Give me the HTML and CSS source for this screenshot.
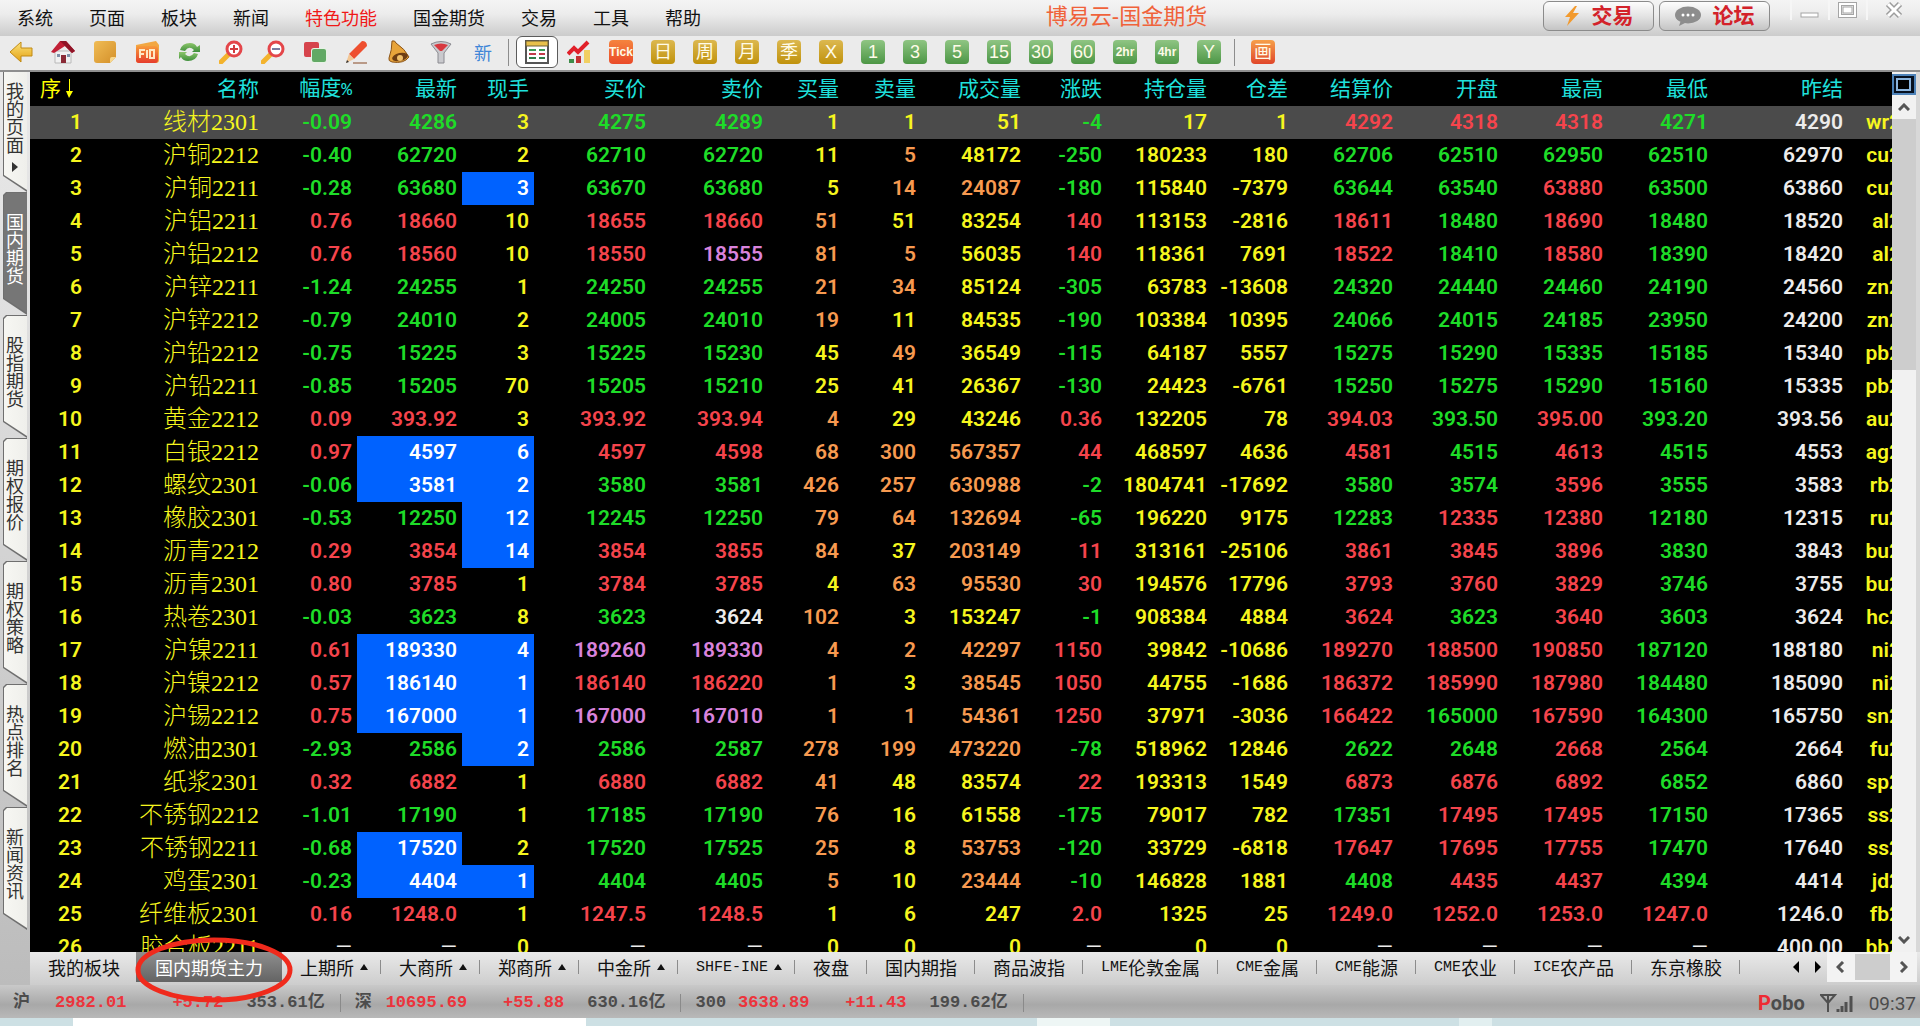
FILE: index.html
```html
<!DOCTYPE html>
<html lang="zh-CN">
<head>
<meta charset="utf-8">
<title>博易云-国金期货</title>
<link rel="stylesheet" href="styles.css">
</head>
<body>
<svg class="defs" aria-hidden="true">
  <defs>
    <linearGradient id="gold" x1="0" y1="0" x2="0" y2="1"><stop offset="0" stop-color="#fbe27a"/><stop offset="1" stop-color="#e3a012"/></linearGradient>
    <linearGradient id="note" x1="0" y1="0" x2="1" y2="1"><stop offset="0" stop-color="#f0bc55"/><stop offset="1" stop-color="#d4902a"/></linearGradient>
    <linearGradient id="hot" x1="0" y1="0" x2="0" y2="1"><stop offset="0" stop-color="#f79a3a"/><stop offset="1" stop-color="#e63c2c"/></linearGradient>
    <linearGradient id="leaf" x1="0" y1="0" x2="0" y2="1"><stop offset="0" stop-color="#8cc56a"/><stop offset="1" stop-color="#3f8f3c"/></linearGradient>
  </defs>
</svg>

<header class="menubar">
  <nav class="menu">
    <button>系统</button><button>页面</button><button>板块</button><button>新闻</button><button class="hot">特色功能</button><button>国金期货</button><button>交易</button><button>工具</button><button>帮助</button>
  </nav>
  <h1 class="title">博易云-国金期货</h1>
  <div class="quick">
    <button class="pill"><svg width="16" height="22" viewBox="0 0 16 22"><path d="M11 1 1 12h5l-3 9L15 8H9l4-7z" fill="#f29a2e"/></svg>交易</button>
    <button class="pill"><svg width="26" height="20" viewBox="0 0 26 20"><ellipse cx="13" cy="9" rx="13" ry="8.500" fill="#8d8d8d"/><path d="M6 14 4 20l8-4z" fill="#8d8d8d"/><g fill="#fff"><circle cx="8" cy="9" r="1.500"/><circle cx="13" cy="9" r="1.500"/><circle cx="18" cy="9" r="1.500"/></g></svg>论坛</button>
  </div>
  <div class="winctl">
    <button aria-label="最小化"><svg width="20" height="18" viewBox="0 0 20 18"><rect x="1" y="12" width="17" height="4" fill="#fff" stroke="#a5a5a5"/></svg></button>
    <button aria-label="最大化"><svg width="20" height="18" viewBox="0 0 20 18"><rect x="2" y="3" width="15" height="12" fill="none" stroke="#a5a5a5" stroke-width="4"/><rect x="2" y="3" width="15" height="12" fill="none" stroke="#fff" stroke-width="2"/><rect x="5" y="6" width="9" height="6" fill="#fff" stroke="#a5a5a5"/></svg></button>
    <button aria-label="关闭"><svg width="20" height="18" viewBox="0 0 20 18"><path d="m4 3 12 12M16 3 4 15" stroke="#9d9d9d" stroke-width="6"/><path d="m4 3 12 12M16 3 4 15" stroke="#fff" stroke-width="3"/></svg></button>
  </div>
</header>

<div class="toolbar" role="toolbar">
  <button aria-label="后退"><svg viewBox="0 0 24 24"><path d="M1 12 12 2v6h11v8H12v6z" fill="url(#gold)" stroke="#c18a14"/></svg></button>
  <button aria-label="首页"><svg viewBox="0 0 24 24"><path d="M4 11h16v12H4z" fill="#f1f1f1" stroke="#b9b9b9"/><path d="M0 12 9 1h6l9 10-3 2-7-7-11 7z" fill="#c22036"/><path d="M9 1h6l9 10-3 2z" fill="#8f1527"/><path d="M10 15h5v8h-5z" fill="#8a2a36"/><path d="M6 14h3v3H6zM16 14h3v3h-3z" fill="#7d8fa8"/></svg></button>
  <button aria-label="便笺"><svg viewBox="0 0 24 24"><path d="M1 4q0-3 3-3h16q3 0 3 3v13l-6 6H4q-3 0-3-3z" fill="url(#note)"/><path d="m17 23 6-6h-4q-2 0-2 2z" fill="#f8d88e"/></svg></button>
  <button aria-label="F10 资料"><svg viewBox="0 0 24 24"><path d="m1 5 20-4 3 4v15q0 3-3 3H4q-3 0-3-3z" fill="#f2a742"/><rect x="1" y="6" width="22" height="17" rx="3" fill="url(#hot)"/><path d="M5 18v-8h5M5 14h4M12 10v8M15 10h4v8h-4z" fill="none" stroke="#ffe8c4" stroke-width="2"/></svg></button>
  <button aria-label="刷新"><svg viewBox="0 0 24 24"><path d="M3 10q2-7 10-7 5 0 7 4l3-2v7h-8l2-2q-5-5-9 1z" fill="url(#leaf)"/><path d="M21 14q-2 7-10 7-5 0-7-4l-2 2v-7h8l-2 2q5 5 9-1z" fill="url(#leaf)"/></svg></button>
  <button aria-label="放大"><svg viewBox="0 0 24 24"><path d="m2 22 8-8" stroke="#f3b32d" stroke-width="5" stroke-linecap="round"/><circle cx="15" cy="9" r="7" fill="#fff" stroke="#e4464a" stroke-width="3"/><path d="M11 9h8M15 5v8" stroke="#d33a3e" stroke-width="2"/></svg></button>
  <button aria-label="缩小"><svg viewBox="0 0 24 24"><path d="m2 22 8-8" stroke="#f3b32d" stroke-width="5" stroke-linecap="round"/><circle cx="15" cy="9" r="7" fill="#fff" stroke="#e4464a" stroke-width="3"/><path d="M11 9h8" stroke="#7b7ba0" stroke-width="2"/></svg></button>
  <button aria-label="叠加"><svg viewBox="0 0 24 24"><rect x="1" y="2" width="15" height="15" rx="2" fill="#d6444c"/><rect x="8" y="8" width="16" height="15" rx="3" fill="#e6f3e4"/><rect x="9" y="9" width="14" height="13" rx="2" fill="#62a965"/></svg></button>
  <button aria-label="画笔"><svg viewBox="0 0 24 24"><path d="M17 1q5 0 5 5L9 19l-5-5z" fill="#ee4f2f"/><path d="m4 14 5 5-8 4z" fill="#f3c693"/><path d="m1 23 3-1-2-2z" fill="#333"/><path d="M8 23h14" stroke="#b99a88" stroke-width="2"/></svg></button>
  <button aria-label="预警"><svg viewBox="0 0 24 24"><path d="M5 1q3-1 4 2 9 6 13 14-5 7-17 5-4-1-3-4 3-8 3-17z" fill="#e8a43a" stroke="#8a5317"/><ellipse cx="13" cy="17" rx="8" ry="4" transform="rotate(-12 13 17)" fill="#6e3d12"/><circle cx="13" cy="18" r="3" fill="#f1c06a"/></svg></button>
  <button aria-label="筛选"><svg viewBox="0 0 24 24"><path d="M2 4q10-5 20 0l-7 9v10H9V13z" fill="#c9c9cd" stroke="#8a8a90"/><path d="M5 5q7-3 14 0l-6 6h-2z" fill="#d8383f"/></svg></button>
  <button class="new">新</button>
  <span class="rule"></span>
  <button class="active" aria-label="报价列表"><svg viewBox="0 0 24 24"><rect x="1" y="1" width="22" height="22" fill="#fff" stroke="#555" stroke-width="2"/><path d="M1 1h22v5H1z" fill="#e8c04a" stroke="#6f6136"/><g stroke-width="2"><path d="M4 10h7M14 10h6" stroke="#3b9c56"/><path d="M4 14h7M14 14h6" stroke="#c23c4a"/><path d="M4 18h7M14 18h6" stroke="#2f7d49"/></g></svg></button>
  <button aria-label="走势"><svg viewBox="0 0 24 24"><path d="m1 14 6-6 4 4L21 2" fill="none" stroke="#e1202a" stroke-width="4"/><path d="M2 19h5v4H2z" fill="#3e8c49"/><path d="M9 16h5v7H9z" fill="#c43232"/><path d="M17 10h6v13h-6z" fill="#f1cf62"/></svg></button>
  <button><span class="tile tick">Tick</span></button>
  <button><span class="tile gold">日</span></button>
  <button><span class="tile gold">周</span></button>
  <button><span class="tile gold">月</span></button>
  <button><span class="tile gold">季</span></button>
  <button><span class="tile gold">X</span></button>
  <button><span class="tile green">1</span></button>
  <button><span class="tile green">3</span></button>
  <button><span class="tile green">5</span></button>
  <button><span class="tile green">15</span></button>
  <button><span class="tile green">30</span></button>
  <button><span class="tile green">60</span></button>
  <button><span class="tile green small">2hr</span></button>
  <button><span class="tile green small">4hr</span></button>
  <button><span class="tile green">Y</span></button>
  <span class="rule"></span>
  <button><span class="tile orange">画</span></button>
</div>

<main class="work">
  <nav class="side">
    <button class="first"><span>我的页面</span><i class="more"></i></button>
    <button class="current"><span>国内期货</span></button>
    <button><span>股指期货</span></button>
    <button><span>期权报价</span></button>
    <button><span>期权策略</span></button>
    <button><span>热点排名</span></button>
    <button><span>新闻资讯</span></button>
  </nav>
  <div class="content">
    <div class="board">
      <div class="quotes">
        <table>
          <colgroup><col class="w57"><col class="w177"><col class="w93"><col class="w105"><col class="w72"><col class="w117"><col class="w117"><col class="w76"><col class="w77"><col class="w105"><col class="w81"><col class="w105"><col class="w81"><col class="w105"><col class="w105"><col class="w105"><col class="w105"><col class="w135"><col class="w94"></colgroup>
          <thead>
            <tr><th class="order">序<svg width="9" height="20" viewBox="0 0 9 20"><path d="M4 0v12h-3l3 7 4-7H5V0z" fill="#ff0"/></svg></th><th>名称</th><th>幅度<small>%</small></th><th>最新</th><th>现手</th><th>买价</th><th>卖价</th><th>买量</th><th>卖量</th><th>成交量</th><th>涨跌</th><th>持仓量</th><th>仓差</th><th>结算价</th><th>开盘</th><th>最高</th><th>最低</th><th>昨结</th><th></th></tr>
          </thead>
          <tbody id="rows"></tbody>
        </table>
      </div>
      <div class="vscroll">
        <button class="restore" aria-label="还原"><svg width="24" height="21" viewBox="0 0 24 21"><rect x="1" y="1" width="22" height="19" fill="#06101f" stroke="#4d82b8" stroke-width="2"/><rect x="5" y="5" width="13" height="11" fill="#000" stroke="#8ab4dd" stroke-width="2"/></svg></button>
        <button aria-label="上滚"><svg width="12" height="8" viewBox="0 0 12 8"><path d="m1 7 5-5 5 5" fill="none" stroke="#555" stroke-width="3"/></svg></button>
        <div class="track"><div class="thumb"></div></div>
        <button aria-label="下滚"><svg width="12" height="8" viewBox="0 0 12 8"><path d="m1 1 5 5 5-5" fill="none" stroke="#555" stroke-width="3"/></svg></button>
      </div>
    </div>
    <div class="sheets">
      <button>我的板块</button>
      <button class="current">国内期货主力<svg class="ring" width="160" height="68" viewBox="0 0 160 68" aria-hidden="true"><ellipse cx="80" cy="34" rx="76" ry="30" fill="none" stroke="#f02a1c" stroke-width="5"/></svg></button>
      <button class="sep">上期所<i class="up"></i></button>
      <button class="sep">大商所<i class="up"></i></button>
      <button class="sep">郑商所<i class="up"></i></button>
      <button class="sep">中金所<i class="up"></i></button>
      <button class="sep"><b>SHFE-INE</b><i class="up"></i></button>
      <button class="sep">夜盘</button>
      <button class="sep">国内期指</button>
      <button class="sep">商品波指</button>
      <button class="sep"><b>LME</b>伦敦金属</button>
      <button class="sep"><b>CME</b>金属</button>
      <button class="sep"><b>CME</b>能源</button>
      <button class="sep"><b>CME</b>农业</button>
      <button class="sep"><b>ICE</b>农产品</button>
      <button class="sep">东京橡胶</button>
      <div class="pager">
        <button aria-label="前一页"><svg width="6" height="12" viewBox="0 0 6 12"><path d="M6 0v12L0 6z"/></svg></button>
        <button aria-label="后一页"><svg width="6" height="12" viewBox="0 0 6 12"><path d="M0 0v12l6-6z"/></svg></button>
      </div>
      <div class="hscroll">
        <button aria-label="左滚"><svg width="9" height="12" viewBox="0 0 9 12"><path d="M7 1 2 6l5 5" fill="none" stroke="#555" stroke-width="3"/></svg></button>
        <div class="thumb"></div>
        <button aria-label="右滚"><svg width="9" height="12" viewBox="0 0 9 12"><path d="m2 1 5 5-5 5" fill="none" stroke="#555" stroke-width="3"/></svg></button>
      </div>
    </div>
  </div>
</main>

<footer class="status">
  <div class="index"><span class="tag">沪</span><span class="rise">2982.01</span><span class="rise diff">+5.72</span><span>353.61亿</span></div>
  <div class="index"><span>深</span><span class="rise">10695.69</span><span class="rise diff">+55.88</span><span>630.16亿</span></div>
  <div class="index"><span>300</span><span class="rise near">3638.89</span><span class="rise diff">+11.43</span><span>199.62亿</span></div>
  <div class="tray">
    <span class="brand"><em>P</em>obo</span>
    <svg width="34" height="20" viewBox="0 0 34 20" fill="none" stroke="#505050" stroke-width="2"><path d="M1 2h14L8 10zM8 3v16" /><path d="M18 16v3M22 13v6M26 9v10M31 3v16" stroke-width="3"/></svg>
    <time>09:37</time>
  </div>
</footer>
<div class="desktop"><span class="paper"></span><span class="card"></span><span class="chip"></span></div>
<script src="quotes.js"></script>
</body>
</html>
```

FILE: styles.css
```css
* { box-sizing: border-box; }

body {
  margin: 0;
  height: 100vh;
  display: flex;
  flex-direction: column;
  overflow: hidden;
  background: #c4c4c4;
  font: 18px "Liberation Sans", "Noto Sans CJK SC", sans-serif;
  color: #111;
}

button {
  margin: 0;
  padding: 0;
  border: 0;
  background: none;
  color: inherit;
  font: inherit;
  white-space: nowrap;
}

.defs { position: absolute; width: 0; height: 0; }

/* menu bar */
.menubar {
  flex: none;
  display: flex;
  height: 36px;
  background: linear-gradient(#f4f4f4, #ececec 40%, #cbcbcb);
}
.menu { display: flex; gap: 36px; padding: 0 0 2px 17px; }
.menu .hot { color: #f01818; }
.title {
  flex: 1;
  margin: 0;
  padding-left: 9px;
  text-align: center;
  font-size: 22px;
  font-weight: 400;
  line-height: 34px;
  color: #f0623a;
}
.quick { display: flex; gap: 5px; padding: 1px 0 5px; }
.pill {
  display: flex;
  align-items: center;
  justify-content: center;
  gap: 12px;
  width: 111px;
  border: 1px solid #8b8b8b;
  border-radius: 6px;
  background: linear-gradient(#fdfdfd, #e4e4e4 50%, #c4c4c4);
  font-size: 21px;
  font-weight: 700;
  line-height: 24px;
  color: #d3222a;
}
.winctl { display: flex; padding-left: 20px; height: 20px; }
.winctl button { width: 38px; border-left: 2px solid #f6f6f6; }
.winctl button:last-child { width: 54px; }
.winctl svg { display: block; margin: 0 auto; }

/* tool bar */
.toolbar {
  flex: none;
  display: flex;
  align-items: center;
  height: 36px;
  padding-bottom: 2px;
  border-bottom: 2px solid #8f8f8f;
  background: #ebebeb;
}
.toolbar button {
  display: flex;
  align-items: center;
  justify-content: center;
  width: 42px;
  height: 32px;
}
.toolbar button > svg { width: 24px; height: 24px; }
.toolbar .new { color: #3f86d8; }
.toolbar .active {
  border: 1px solid #5c5c5c;
  border-radius: 6px;
  background: #fff;
}
.rule { width: 12px; height: 27px; background: linear-gradient(#8d8d8d, #8d8d8d) 4px 0 / 1px 100% no-repeat; }
.tile {
  width: 24px;
  height: 24px;
  border-radius: 4px;
  color: #fffbe8;
  font-size: 18px;
  line-height: 24px;
  text-align: center;
  overflow: hidden;
}
.tile.gold { background: linear-gradient(#dcb850, #c0920c); }
.tile.green { background: linear-gradient(#8fc583, #4c9645); font-size: 18px; }
.tile.orange { background: linear-gradient(#f6a04a, #e0462a); }
.tile.tick { background: linear-gradient(#f5843e, #ea4a28); font-size: 12px; font-weight: 700; }
.tile.small { font-size: 12px; font-weight: 700; }

/* work area */
.work { flex: 1; min-height: 0; display: flex; }
.side {
  flex: none;
  display: flex;
  flex-direction: column;
  width: 30px;
  padding-left: 3px;
  background: linear-gradient(#e9e9e9, #dedede 30%, #bcbcbc);
}
.side button {
  position: relative;
  display: flex;
  flex-direction: column;
  align-items: center;
  width: 24px;
  height: 123px;
  padding-top: 22px;
  line-height: 18px;
  color: #333;
  background: #6f6f6f;
  clip-path: polygon(0 3px, 3px 0, 100% 0, 100% 100%, 0 107px);
}
.side button::before {
  content: "";
  position: absolute;
  inset: 0;
  background: linear-gradient(90deg, #f7f7f3, #efefeb);
  clip-path: polygon(1px 4px, 4px 1px, 100% 1px, 100% 121px, 1px 106px);
}
.side span {
  position: relative;
  width: 18px;
  white-space: normal;
  word-break: break-all;
}
.side .first { height: 120px; padding-top: 11px; clip-path: polygon(0 0, 100% 0, 100% 100%, 0 104px); }
.side .first::before { clip-path: polygon(1px 0, 100% 0, 100% 118px, 1px 103px); }
.side .current { color: #fff; }
.side .current::before { background: #767676; }
.more {
  position: relative;
  margin-top: 7px;
  border: 5px solid transparent;
  border-left: 6px solid #333;
  border-right: 0;
}

.content { flex: 1; min-width: 0; display: flex; flex-direction: column; }
.board { flex: 1; min-height: 0; display: flex; padding-right: 4px; background: #d8d8d8; }
.quotes { flex: 1; min-width: 0; overflow: hidden; background: #000; }

table { table-layout: fixed; width: 1912px; border-collapse: collapse; }
.w57 { width: 57px; }
.w72 { width: 72px; }
.w76 { width: 76px; }
.w77 { width: 77px; }
.w81 { width: 81px; }
.w93 { width: 93px; }
.w94 { width: 94px; }
.w105 { width: 105px; }
.w117 { width: 117px; }
.w135 { width: 135px; }
.w177 { width: 177px; }
th, td {
  height: 33px;
  padding: 0 5px 0 0;
  line-height: 33px;
  text-align: right;
  white-space: nowrap;
}
th { font-size: 21px; font-weight: 400; color: #1fe0dc; line-height: 32px; }
th small { font-family: "Liberation Mono", monospace; font-size: 18px; }
th.order { padding-left: 10px; text-align: left; color: #ff0; }
.order svg { vertical-align: -3px; margin-left: 4px; }
td { font-family: Roboto, "Liberation Sans", sans-serif; font-size: 21px; font-weight: 600; color: #f6f61e; }
td.name { font-family: "Liberation Serif", "Noto Sans CJK SC", serif; font-size: 24px; font-weight: 300; }
td.up { color: #f5444c; }
td.down { color: #1edc28; }
td.flat { color: #ececec; }
td.none { color: #ececec; font-weight: 400; }
td.big { color: #f79a50; }
td.limit { color: #d983dc; }
td.flash { background: #0062ff; color: #fff; }
tr.picked { background: #4b4b4b; }

.vscroll {
  flex: none;
  display: flex;
  flex-direction: column;
  width: 24px;
  padding-top: 1px;
  background: #f1f1f1;
}
.vscroll button { display: flex; align-items: center; justify-content: center; height: 24px; }
.vscroll .restore { height: 22px; }
.track { flex: 1; }
.track .thumb { height: 31%; background: #cdcdcd; }

/* page tabs */
.sheets {
  flex: none;
  display: flex;
  height: 33px;
  padding: 0 3px 3px 0;
  background: linear-gradient(#e9e9e9, #cdcdcd);
}
.sheets > button {
  position: relative;
  display: flex;
  align-items: center;
  padding: 0 18px;
}
.sheets > button:first-child { padding-right: 16px; }
.sheets > .current {
  padding: 0 19px;
  color: #fff;
  background: linear-gradient(#8e8e8e, #646464);
}
.sheets > .sep::after {
  content: "";
  position: absolute;
  right: 0;
  top: 8px;
  height: 14px;
  border-right: 1px solid #8c8c8c;
}
.sheets b { font: 15px "Liberation Mono", monospace; }
i.up { margin-left: 6px; border: 4px solid transparent; border-bottom: 6px solid #111; border-top: 0; }
.sheets > .sep:has(.up) { padding-right: 13px; }
.ring { position: absolute; left: -2px; top: -16px; z-index: 2; }
.pager { display: flex; gap: 16px; margin-left: auto; padding-right: 6px; }
.pager button { display: flex; align-items: center; }
.hscroll { display: flex; width: 90px; background: #f3f3f3; }
.hscroll button { display: flex; flex: 1; align-items: center; justify-content: center; }
.hscroll .thumb { width: 35px; margin: 2px 0; background: #cdcdcd; }

/* status bar */
.status {
  flex: none;
  display: flex;
  align-items: center;
  height: 33px;
  padding: 3px 4px 0 13px;
  background: linear-gradient(#c9c9c9, #a8a8a8 60%, #b9b9b9);
  font: 17px "Liberation Mono", "Noto Sans CJK SC", monospace;
  font-weight: 700;
  color: #4c4c4c;
}
.index { display: flex; align-items: center; gap: 14px; padding-right: 15px; margin-right: 14px; border-right: 1px solid #8a8a8a; line-height: 18px; white-space: pre; }
.index .tag { margin-right: 11px; }
.index .diff { width: 92px; text-align: right; padding-right: 9px; }
.rise { color: #ec343c; }
.index .near { margin-left: -2px; }
.tray { display: flex; align-items: center; gap: 15px; margin-left: auto; font: 20px Roboto, sans-serif; }
.brand { font-weight: 700; }
.brand em { font-style: normal; color: #ee2a33; }
.tray time { font-weight: 400; font-size: 19px; }

/* strip of the desktop below the window */
.desktop { flex: none; display: flex; height: 8px; background: #cde0e4; }
.paper { width: 513px; margin-left: 73px; background: #fff; }
.card { width: 73px; margin-left: 451px; background: #eef6f5; }
.chip { width: 33px; margin-left: 349px; background: #e2eff0; }
```

FILE: quotes.js
```javascript
// name, change %, last, volume, bid, ask, bid qty, ask qty, total, change, open interest,
// OI change, settlement, open, high, low, previous settlement, code
// suffixes: * just changed, o large size, p limit price, r above the previous settlement before rounding
const quotes = `
线材2301 -0.09 4286 3 4275 4289 1 1 51 -4 17 1 4292 4318 4318 4271 4290 wr2301
沪铜2212 -0.40 62720 2 62710 62720 11 5o 48172 -250 180233 180 62706 62510 62950d 62510 62970 cu2212
沪铜2211 -0.28 63680 3* 63670 63680 5 14o 24087o -180 115840 -7379 63644 63540 63880 63500 63860 cu2211
沪铝2211 0.76 18660 10 18655 18660 51o 51 83254 140 113153 -2816 18611 18480 18690 18480 18520 al2211
沪铝2212 0.76 18560 10 18550 18555p 81o 5o 56035 140 118361 7691 18522 18410 18580 18390 18420 al2212
沪锌2211 -1.24 24255 1 24250 24255 21o 34o 85124 -305 63783 -13608 24320 24440 24460 24190 24560 zn2211
沪锌2212 -0.79 24010 2 24005 24010 19o 11 84535 -190 103384 10395 24066 24015 24185 23950 24200 zn2212
沪铅2212 -0.75 15225 3 15225 15230 45 49o 36549 -115 64187 5557 15275 15290 15335 15185 15340 pb2212
沪铅2211 -0.85 15205 70 15205 15210 25 41 26367 -130 24423 -6761 15250 15275 15290 15160 15335 pb2211
黄金2212 0.09 393.92 3 393.92 393.94 4o 29 43246 0.36 132205 78 394.03 393.50 395.00 393.20 393.56 au2212
白银2212 0.97 4597* 6* 4597 4598 68o 300o 567357o 44 468597 4636 4581 4515 4613 4515 4553 ag2212
螺纹2301 -0.06 3581* 2* 3580 3581 426o 257o 630988o -2 1804741 -17692 3580 3574 3596 3555 3583 rb2301
橡胶2301 -0.53 12250 12* 12245 12250 79o 64o 132694o -65 196220 9175 12283 12335 12380 12180 12315 ru2301
沥青2212 0.29 3854 14* 3854 3855 84o 37 203149o 11 313161 -25106 3861 3845 3896 3830 3843 bu2212
沥青2301 0.80 3785 1 3784 3785 4 63o 95530o 30 194576 17796 3793 3760 3829 3746 3755 bu2301
热卷2301 -0.03 3623 8 3623 3624 102o 3 153247 -1 908384 4884 3624r 3623 3640 3603 3624 hc2301
沪镍2211 0.61 189330* 4* 189260p 189330p 4o 2o 42297o 1150 39842 -10686 189270 188500 190850 187120 188180 ni2211
沪镍2212 0.57 186140* 1* 186140 186220 1o 3 38545o 1050 44755 -1686 186372 185990 187980 184480 185090 ni2212
沪锡2212 0.75 167000* 1* 167000p 167010p 1o 1o 54361o 1250 37971 -3036 166422 165000 167590 164300 165750 sn2212
燃油2301 -2.93 2586 2* 2586 2587 278o 199o 473220o -78 518962 12846 2622 2648 2668 2564 2664 fu2301
纸浆2301 0.32 6882 1 6880 6882 41o 48 83574 22 193313 1549 6873 6876 6892 6852 6860 sp2301
不锈钢2212 -1.01 17190 1 17185 17190 76o 16 61558 -175 79017 782 17351 17495 17495 17150 17365 ss2212
不锈钢2211 -0.68 17520* 2 17520 17525 25o 8 53753o -120 33729 -6818 17647 17695 17755 17470 17640 ss2211
鸡蛋2301 -0.23 4404* 1* 4404 4405 5o 10 23444o -10 146828 1881 4408 4435 4437 4394 4414 jd2301
纤维板2301 0.16 1248.0 1 1247.5 1248.5 1 6 247 2.0 1325 25 1249.0 1252.0 1253.0 1247.0 1246.0 fb2301
胶合板2211 — — 0 — — 0 0 0 — 0 0 — — — — 400.00 bb2211`.replace("62950d", "62950").trim().split("\n");

const prices = new Set([2, 4, 5, 12, 13, 14, 15]);
const marks = { "*": "flash", o: "big", p: "limit", r: "up" };
const sign = n => (n > 0 ? "up" : n < 0 ? "down" : "flat");
const body = document.getElementById("rows");

quotes.forEach((line, index) => {
  const fields = line.split(" ");
  const row = body.insertRow();
  if (index === 0) row.className = "picked";
  row.insertCell().textContent = index + 1;
  fields.forEach((field, i) => {
    const cell = row.insertCell();
    const mark = i > 0 && i < 17 ? marks[field.slice(-1)] : undefined;
    const text = mark ? field.slice(0, -1) : field;
    cell.textContent = text;
    if (i === 0) cell.className = "name";
    else if (mark) cell.className = mark;
    else if (text === "—") cell.className = "none";
    else if (i === 16) cell.className = "flat";
    else if (prices.has(i)) cell.className = sign(text - fields[16]);
    else if (i === 1 || i === 9) cell.className = sign(Number(text));
  });
});
```
